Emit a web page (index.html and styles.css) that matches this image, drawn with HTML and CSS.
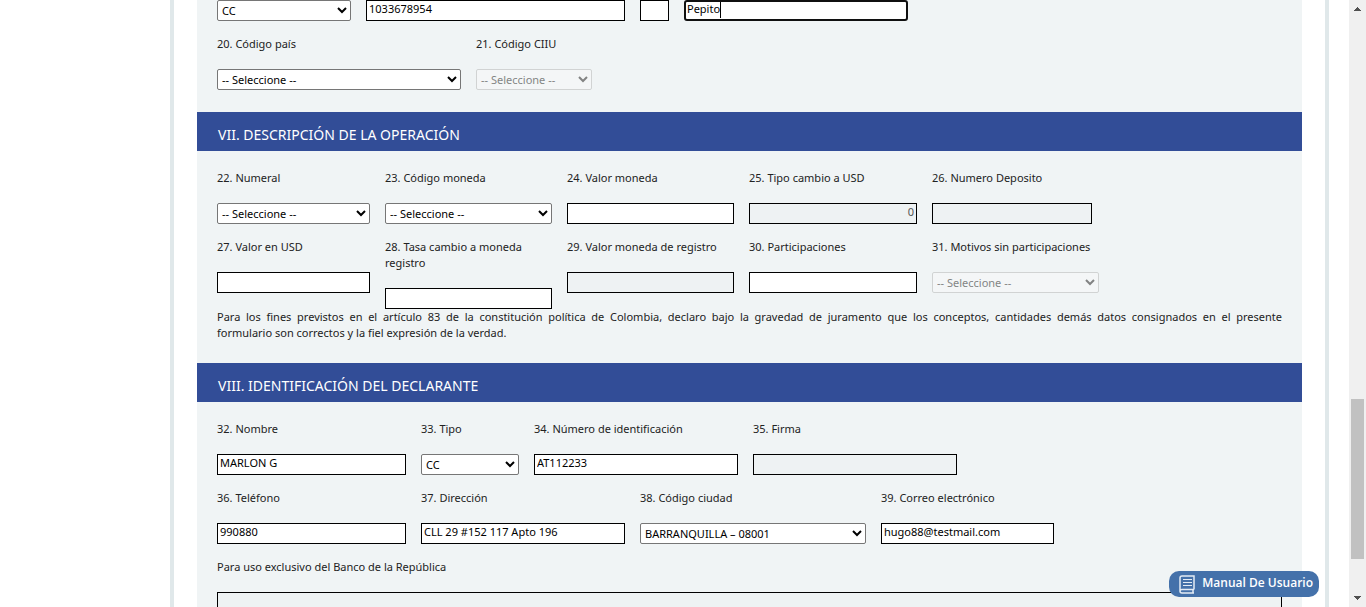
FILE: index.html
```html
<!DOCTYPE html>
<html lang="es">
<head>
<meta charset="utf-8">
<title>Declaración de cambio</title>
<link rel="stylesheet" href="styles.css">
</head>
<body>
<div class="shell">
  <main class="viewport">
    <form class="frame">
      <section class="section">
        <div class="row row-person">
          <div class="field"><select class="control" aria-label="Tipo"><option>CC</option></select></div>
          <div class="field"><input class="control" type="text" value="1033678954" aria-label="Número de identificación"></div>
          <div class="field"><input class="control" type="text" aria-label="DV"></div>
          <div class="field caret"><input class="control active" type="text" value="Pepito" aria-label="Nombre"></div>
        </div>
        <div class="row row-codes">
          <div class="field"><label for="f20">20. Código país</label><select class="control" id="f20"><option>-- Seleccione --</option></select></div>
          <div class="field"><label for="f21">21. Código CIIU</label><select class="control" id="f21" disabled><option>-- Seleccione --</option></select></div>
        </div>
      </section>

      <h2 class="heading">VII. DESCRIPCIÓN DE LA OPERACIÓN</h2>
      <section class="section titled">
        <div class="row row-operation">
          <div class="field"><label for="f22">22. Numeral</label><select class="control" id="f22"><option>-- Seleccione --</option></select></div>
          <div class="field"><label for="f23">23. Código moneda</label><select class="control" id="f23"><option>-- Seleccione --</option></select></div>
          <div class="field"><label for="f24">24. Valor moneda</label><input class="control" type="text" id="f24"></div>
          <div class="field"><label for="f25">25. Tipo cambio a USD</label><input class="control amount" type="text" id="f25" value="0" disabled></div>
          <div class="field"><label for="f26">26. Numero Deposito</label><input class="control short" type="text" id="f26" disabled></div>
        </div>
        <div class="row row-operation">
          <div class="field"><label for="f27">27. Valor en USD</label><input class="control" type="text" id="f27"></div>
          <div class="field"><label for="f28">28. Tasa cambio a moneda registro</label><input class="control" type="text" id="f28"></div>
          <div class="field"><label for="f29">29. Valor moneda de registro</label><input class="control" type="text" id="f29" disabled></div>
          <div class="field"><label for="f30">30. Participaciones</label><input class="control" type="text" id="f30"></div>
          <div class="field"><label for="f31">31. Motivos sin participaciones</label><select class="control" id="f31" disabled><option>-- Seleccione --</option></select></div>
        </div>
        <p class="oath">Para los fines previstos en el artículo 83 de la constitución política de Colombia, declaro bajo la gravedad de juramento que los conceptos, cantidades demás datos consignados en el presente formulario&nbsp;son&nbsp;correctos y la fiel expresión de la verdad.</p>
      </section>

      <h2 class="heading">VIII. IDENTIFICACIÓN DEL DECLARANTE</h2>
      <section class="section titled">
        <div class="row row-signer">
          <div class="field"><label for="f32">32. Nombre</label><input class="control" type="text" id="f32" value="MARLON G"></div>
          <div class="field"><label for="f33">33. Tipo</label><select class="control" id="f33"><option>CC</option></select></div>
          <div class="field"><label for="f34">34. Número de identificación</label><input class="control" type="text" id="f34" value="AT112233"></div>
          <div class="field"><label for="f35">35. Firma</label><input class="control" type="text" id="f35" disabled></div>
        </div>
        <div class="row row-contact">
          <div class="field"><label for="f36">36. Teléfono</label><input class="control" type="text" id="f36" value="990880"></div>
          <div class="field"><label for="f37">37. Dirección</label><input class="control" type="text" id="f37" value="CLL 29 #152 117 Apto 196"></div>
          <div class="field"><label for="f38">38. Código ciudad</label><select class="control" id="f38"><option>BARRANQUILLA – 08001</option></select></div>
          <div class="field"><label for="f39">39. Correo electrónico</label><input class="control" type="text" id="f39" value="hugo88@testmail.com"></div>
        </div>
        <div class="row">
          <div class="field"><label for="bank">Para uso exclusivo del Banco de la República</label><textarea class="control bank" id="bank" disabled></textarea></div>
        </div>
      </section>
    </form>
  </main>
  <div class="scrollbar" aria-hidden="true">
    <svg class="arrow" viewBox="0 0 17 17"><path d="M5 11h7v-1h-1V9h-1V8H9V7H8v1H7v1H6v1H5z"/></svg>
    <div class="track"><div class="thumb"></div></div>
    <svg class="arrow" viewBox="0 0 17 17"><path d="M5 6h7v1h-1v1h-1v1H9v1H8V9H7V8H6V7H5z"/></svg>
  </div>
  <button class="manual" type="button">
    <svg class="book" viewBox="0 0 16 19"><path d="M15 14.500V1H3Q1 1 1 3v13M15 14.500H3Q1 14.500 1 16.200T3 18h12M14 14.500V18"/><path class="lines" d="M4 4.500h9M4 7.500h9M4 10.500h9"/></svg>
    <span>Manual De Usuario</span>
  </button>
</div>
</body>
</html>
```
FILE: styles.css
```css
* { box-sizing: border-box; }

body {
  margin: 0;
  background: #fff;
  color: #222;
  font: 11px/16px "Noto Sans", "Open Sans", sans-serif;
}

.shell {
  position: relative;
  display: flex;
  height: 100vh;
  overflow: hidden;
}

.viewport {
  flex: 1;
  min-width: 0;
  overflow: hidden;
  padding: 0 20px 0 170px;
}

.frame {
  border: solid #e0e8ea;
  border-width: 0 4px;
  padding: 0 23px;
}

.section {
  padding: 0 20px 22px;
  background: #f0f4f5;
}

.titled { padding-top: 19px; }

.heading {
  margin: 0;
  padding: 14px 21px 7px;
  background: #324d97;
  color: #fff;
  font-size: 14px;
  font-weight: 400;
  line-height: 18px;
}

.row {
  display: grid;
  gap: 15px;
  align-items: start;
}

.row + .row { margin-top: 15px; }

.row-person { grid-template-columns: 134fr 259fr 29fr 224fr 359fr; }
.row-codes { grid-template-columns: 244fr 116fr 675fr; }
.row-operation { grid-template-columns: 153fr 167fr 167fr 168fr 167fr 168fr; }
.row-signer { grid-template-columns: 189fr 98fr 204fr 204fr 310fr; }
.row-contact { grid-template-columns: 189fr 204fr 226fr 173fr 213fr; }

.field {
  position: relative;
  min-width: 0;
}

.field label {
  display: block;
  margin-bottom: 17px;
}

.control {
  display: block;
  width: 100%;
  height: 21px;
  margin: 0;
  padding: 0 2px 4px;
  border: 1px solid #000;
  border-radius: 0;
  background: #fff;
  color: #000;
  font: inherit;
}

select.control {
  padding: 0 0 1px;
  border-color: #767676;
  border-radius: 2px;
}

.control:disabled {
  background: #eef2f3;
  color: #545454;
}

select.control:disabled {
  border-color: #c4c6c6;
  background: #f6f8f8;
  opacity: .7;
}

.amount { text-align: right; }
.short { width: 96%; }
.bank { height: 80px; resize: none; }

.active {
  border: 2px solid #101010;
  border-radius: 3px;
  padding: 0 1px 4px;
  outline: 0;
}

.caret::after {
  content: "";
  position: absolute;
  top: 2px;
  left: 36px;
  width: 1px;
  height: 16px;
  background: #000;
}

.oath {
  margin: 0;
  text-align: justify;
}

.scrollbar {
  display: flex;
  flex-direction: column;
  width: 17px;
  background: #f0f0f0;
}

.arrow {
  width: 17px;
  height: 17px;
  fill: #505050;
  shape-rendering: crispEdges;
}

.track {
  display: flex;
  flex: 1;
  flex-direction: column;
  justify-content: flex-end;
  padding: 0 2px 31px;
}

.thumb {
  height: 160px;
  background: #c1c1c1;
}

.manual {
  position: absolute;
  right: 47px;
  bottom: 10px;
  display: flex;
  align-items: center;
  gap: 7px;
  height: 26px;
  padding: 0 6px 2px 10px;
  border: 0;
  border-radius: 10px;
  background: #4471aa;
  color: #fff;
  font: 600 12px/16px "Open Sans", "Noto Sans", sans-serif;
}

.book {
  width: 16px;
  height: 19px;
  margin-top: 2px;
  fill: none;
  stroke: #e3ebf5;
  stroke-width: 1.500;
}

.lines { stroke-width: 1; }
```
